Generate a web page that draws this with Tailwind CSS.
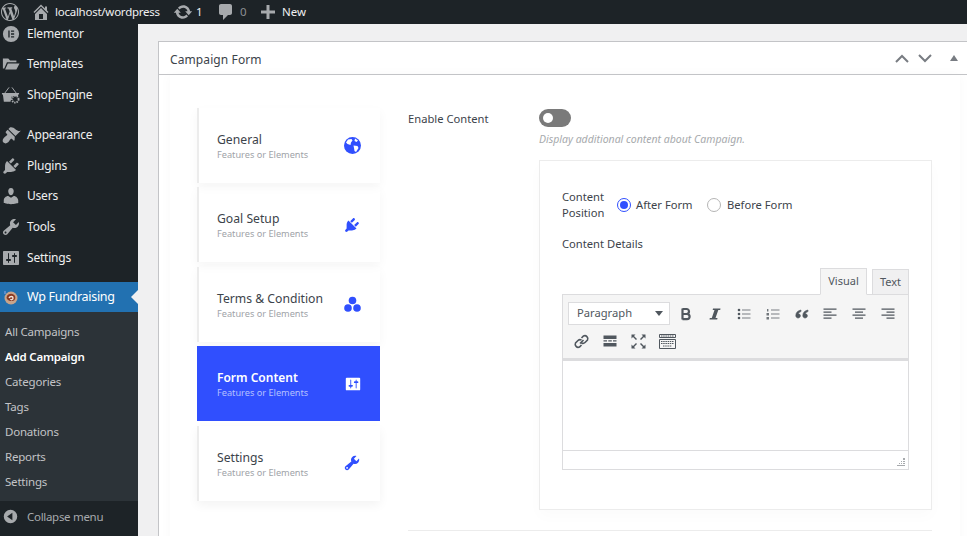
<!DOCTYPE html>
<html lang="en">
  <head>
    <meta charset="UTF-8" />
    <script src="https://cdn.jsdelivr.net/npm/@tailwindcss/browser@4"></script>
  </head>
  <body class="w-[967px] h-[536px] overflow-hidden bg-[#f0f0f1] font-['Noto_Sans',sans-serif]">
    <!-- admin bar -->
    <header class="relative z-10 h-6 bg-[#1d2327] flex items-center text-[11.5px] text-[#f0f0f1]">
      <svg class="w-[18px] h-[18px] ml-[1px] mr-[12px] text-[#a7aaad]" viewBox="0 0 20 20" fill="currentColor"><path d="M20 10c0-5.51-4.49-10-10-10C4.48 0 0 4.49 0 10c0 5.52 4.48 10 10 10 5.51 0 10-4.48 10-10zM7.78 15.37L4.37 6.22c.55-.02 1.17-.08 1.17-.08.5-.06.44-1.13-.06-1.11 0 0-1.45.11-2.37.11-.18 0-.37 0-.58-.01C4.12 2.69 6.87 1.11 10 1.11c2.33 0 4.45.87 6.05 2.34-.68-.11-1.65.39-1.65 1.58 0 .74.45 1.36.9 2.1.35.61.55 1.36.55 2.46 0 1.49-1.4 5-1.4 5l-3.03-8.37c.54-.02.82-.17.82-.17.5-.05.44-1.25-.06-1.22 0 0-1.44.12-2.38.12-.87 0-2.33-.12-2.33-.12-.5-.03-.56 1.2-.06 1.22l.92.08 1.26 3.41zM17.41 10c.24-.64.74-1.87.43-4.25.7 1.29 1.05 2.71 1.05 4.25 0 3.29-1.73 6.24-4.4 7.78.97-2.59 1.94-5.2 2.92-7.78zM6.1 18.09C3.12 16.65 1.11 13.53 1.11 10c0-1.3.23-2.48.72-3.59C3.25 10.3 4.67 14.2 6.1 18.09zm4.03-6.63l2.58 6.98c-.86.29-1.76.45-2.71.45-.79 0-1.57-.11-2.29-.33.81-2.38 1.62-4.74 2.42-7.1z"/></svg>
      <svg class="w-5 h-5 mr-[4px] text-[#a7aaad]" viewBox="0 0 20 20" fill="currentColor"><path d="M16 8.5l1.53 1.53-1.06 1.06L10 4.62l-6.47 6.47-1.06-1.06L10 2.5l4 4v-2h2v4zm-6-2.46l6 5.99V18H4v-5.97zM12 17v-5H8v5h4z"/></svg>
      <span class="w-[118px] tracking-[-0.25px]">localhost/wordpress</span>
      <svg class="w-5 h-5 mr-[3px] text-[#a7aaad]" viewBox="0 0 20 20" fill="currentColor"><path d="M10.2 3.28c3.53 0 6.43 2.61 6.92 6h2.08l-3.5 4-3.5-4h2.32c-.45-1.97-2.21-3.45-4.32-3.45-1.45 0-2.73.71-3.54 1.78L4.95 5.66C6.23 4.2 8.11 3.28 10.2 3.28zm-.4 13.44c-3.52 0-6.43-2.61-6.92-6H.8l3.5-4c1.17 1.33 2.33 2.67 3.5 4H5.48c.45 1.97 2.21 3.45 4.32 3.45 1.45 0 2.73-.71 3.54-1.78l1.71 1.95c-1.28 1.46-3.15 2.38-5.25 2.38z"/></svg>
      <span class="w-[20px]">1</span>
      <svg class="w-5 h-5 mr-[4px] text-[#a7aaad]" viewBox="0 0 20 20" fill="currentColor"><path d="M5 2h9c1.1 0 2 .9 2 2v7c0 1.1-.9 2-2 2h-2l-5 5v-5H5c-1.1 0-2-.9-2-2V4c0-1.1.9-2 2-2z"/></svg>
      <span class="w-[18px] text-[#8c8f94]">0</span>
      <svg class="w-5 h-5 mr-[4px] text-[#a7aaad]" viewBox="0 0 20 20" fill="currentColor"><path d="M17 8.5v3h-5.500V17h-3v-5.500H3v-3h5.500V3h3v5.500z"/></svg>
      <span>New</span>
    </header>

    <div class="flex h-[512px]">
      <!-- sidebar -->
      <aside class="w-[138px] shrink-0 bg-[#1d2327] flex flex-col text-[12px] tracking-[-0.2px] text-[#f0f0f1] overflow-hidden">
        <nav class="mt-[-5px] flex flex-col">
          <a class="h-[30px] flex items-center pl-[2px] gap-[7px]">
            <svg class="w-[18px] h-[18px] text-[#a7aaad]" viewBox="0 0 20 20" fill="currentColor"><path fill-rule="evenodd" d="M10 1a9 9 0 100 18 9 9 0 000-18zM7 6h1.5v8H7zm3 0h3.5v1.5H10zm0 3.2h3.5v1.5H10zm0 3.3h3.5V14H10z"/></svg>
            <span>Elementor</span>
          </a>
          <a class="h-[30px] flex items-center pl-[2px] gap-[7px]">
            <svg class="w-[18px] h-[18px] text-[#a7aaad]" viewBox="0 0 20 20" fill="currentColor"><path d="M1 4h6l2 2h7v2H5.5L2.5 15H1zM6.5 9.500H19.500L16 16H3.500z"/></svg>
            <span>Templates</span>
          </a>
          <a class="h-[31px] flex items-center pl-[1px] gap-[7px] mb-[10px]">
            <svg class="w-[19px] h-[19px] text-[#a7aaad]" viewBox="0 0 20 20" fill="currentColor"><path d="M1 8.500h18v1.500h-1v1.500h-6.500L10 17.500H3L2 10H1z"/><path d="M4 8.500L8.500 2.500M16 8.500L11.500 2.500" stroke="currentColor" fill="none" stroke-width="1"/><circle cx="15" cy="15" r="3.500" fill="none" stroke="currentColor" stroke-width="2" stroke-dasharray="1.500 1"/></svg>
            <span>ShopEngine</span>
          </a>
          <a class="h-[30px] flex items-center pl-[1px] gap-[6px]">
            <svg class="w-5 h-5 text-[#a7aaad]" viewBox="0 0 20 20" fill="currentColor"><path d="M14.48 11.06L7.41 3.99l1.5-1.5c.5-.56 2.3-.47 3.51.32 1.21.8 1.43 1.28 2.91 2.1 1.18.64 2.45 1.26 4.45.85zm-.71.71L6.7 4.7 4.93 6.47c-.39.39-.39 1.02 0 1.41l1.06 1.06c.39.39.39 1.03 0 1.42-.6.6-1.43 1.11-2.21 1.69-.35.26-.7.53-1.01.84-1.43 1.43-1.4 3.6-.3 4.7 1.1 1.1 3.27 1.13 4.7-.3.31-.31.58-.66.84-1.01.58-.78 1.09-1.61 1.69-2.21.39-.39 1.03-.39 1.42 0l1.06 1.06c.39.39 1.02.39 1.41 0z"/></svg>
            <span>Appearance</span>
          </a>
          <a class="h-[31px] flex items-center pl-[1px] gap-[6px]">
            <svg class="w-5 h-5 text-[#a7aaad]" viewBox="0 0 20 20" fill="currentColor"><path d="M13.11 4.36L9.87 7.6 8 5.73l3.24-3.24c.35-.34 1.05-.2 1.56.32.52.51.66 1.21.31 1.55zm-8 1.77l.91-1.12 9.01 9.01-1.19.84c-.71.71-2.63 1.16-3.82 1.16H6.14L4.9 17.26c-.59.59-1.54.59-2.12 0-.59-.58-.59-1.53 0-2.12l1.24-1.24v-3.88c0-1.13.4-3.19 1.09-3.89zm7.26 3.97l3.24-3.24c.34-.35 1.04-.21 1.55.31.52.51.66 1.21.31 1.55l-3.24 3.25z"/></svg>
            <span>Plugins</span>
          </a>
          <a class="h-[30px] flex items-center pl-[1px] gap-[6px]">
            <svg class="w-5 h-5 text-[#a7aaad]" viewBox="0 0 20 20" fill="currentColor"><path d="M10 9.250c-2.270 0-2.730-3.440-2.730-3.440C7 4.020 7.820 2 9.970 2c2.160 0 2.980 2.020 2.710 3.810 0 0-.41 3.440-2.680 3.440zm0 2.570L12.720 10c2.390 0 4.520 2.330 4.520 4.530v2.490s-3.650 1.130-7.240 1.130c-3.650 0-7.240-1.130-7.240-1.130v-2.490c0-2.250 1.940-4.480 4.470-4.480z"/></svg>
            <span>Users</span>
          </a>
          <a class="h-[31px] flex items-center pl-[1px] gap-[6px]">
            <svg class="w-5 h-5 text-[#a7aaad]" viewBox="0 0 20 20" fill="currentColor"><path d="M16.68 9.770c-1.340 1.340-3.300 1.670-4.950.99l-5.410 6.520c-.99.99-2.590.99-3.580 0s-.99-2.590 0-3.570l6.520-5.420c-.68-1.650-.35-3.610.99-4.950 1.280-1.280 3.120-1.620 4.720-1.060l-2.890 2.890 2.820 2.820 2.860-2.870c.53 1.580.18 3.390-1.080 4.650zM3.810 16.210c.4.39 1.040.39 1.430 0 .4-.4.4-1.040 0-1.430-.39-.4-1.030-.4-1.430 0-.39.39-.39 1.030 0 1.430z"/></svg>
            <span>Tools</span>
          </a>
          <a class="h-[31px] flex items-center pl-[1px] gap-[6px] mb-[9px]">
            <svg class="w-5 h-5 text-[#a7aaad]" viewBox="0 0 20 20" fill="currentColor"><path d="M18 16V4c0-.55-.45-1-1-1H3c-.55 0-1 .45-1 1v12c0 .55.45 1 1 1h14c.55 0 1-.45 1-1zM8 11h1c.55 0 1 .45 1 1s-.45 1-1 1H8v1.500c0 .28-.22.5-.5.5s-.5-.22-.5-.5V13H6c-.55 0-1-.45-1-1s.45-1 1-1h1V5.500c0-.28.22-.5.5-.5s.5.22.5.5V11zm5-2h-1c-.55 0-1-.45-1-1s.45-1 1-1h1V5.500c0-.28.22-.5.5-.5s.5.22.5.5V7h1c.55 0 1 .45 1 1s-.45 1-1 1h-1v5.500c0 .28-.22.5-.5.5s-.5-.22-.5-.5V9z"/></svg>
            <span>Settings</span>
          </a>
          <a class="relative h-[30px] flex items-center pl-[3px] gap-[8px] bg-[#2271b1] text-white">
            <svg class="w-[16px] h-[16px]" viewBox="0 0 16 16"><circle cx="8" cy="9" r="6.500" fill="#c9a48a"/><path d="M3.500 9a4.500 4 0 017-3.500c2 1 2.500 3.500 1 5.500-1.500 1.500-5 1.500-7-.5z" fill="#8a3a22"/><path d="M6 9c1-2 4-2 4 0s-2 2-2.500 1" fill="none" stroke="#f3e4da" stroke-width="1.400"/><path d="M2 2v3" stroke="#8fa8e8" stroke-width="1"/></svg>
            <span class="text-[12.500px] tracking-[-0.3px]">Wp Fundraising</span>
            <span class="absolute right-0 top-[8px] border-y-[7px] border-y-transparent border-r-[7px] border-r-[#f0f0f1]"></span>
          </a>
        </nav>
        <ul class="flex-1 bg-[#2c3338] pt-[7px] text-[11.500px] text-[#c3c4c7] pl-[5px] tracking-[-0.2px]">
          <li class="h-[25px] flex items-center">All Campaigns</li>
          <li class="h-[25px] flex items-center font-semibold text-white">Add Campaign</li>
          <li class="h-[25px] flex items-center">Categories</li>
          <li class="h-[25px] flex items-center">Tags</li>
          <li class="h-[25px] flex items-center">Donations</li>
          <li class="h-[25px] flex items-center">Reports</li>
          <li class="h-[25px] flex items-center">Settings</li>
        </ul>
        <div class="h-[35px] shrink-0 flex items-center pl-[3px] pb-[4px] gap-[9px] text-[11.500px] tracking-[-0.3px] text-[#a7aaad] bg-[#1d2327]">
          <svg class="w-[15px] h-[15px]" viewBox="0 0 20 20" fill="currentColor"><path fill-rule="evenodd" d="M10 1a9 9 0 100 18 9 9 0 000-18zm2.500 4v10l-7-5z"/></svg>
          <span>Collapse menu</span>
        </div>
      </aside>

      <!-- main -->
      <main class="flex-1 pl-5 pt-[17px] overflow-hidden">
        <section class="h-[600px] w-[820px] bg-white border-y border-l border-[#c3c4c7]">
          <div class="h-[33px] flex items-center border-b border-[#c3c4c7] pl-[11px] text-[12px] text-[#3c434a] relative">
            <h2 class="pt-1 tracking-[0.1px]">Campaign Form</h2>
            <div class="ml-auto flex items-center text-[#787c82] mr-5">
              <svg class="w-[14px] h-[9px]" viewBox="0 0 14 9" fill="none" stroke="currentColor" stroke-width="2"><path d="M1 8l6-6 6 6"/></svg>
              <svg class="w-[14px] h-[9px] ml-[9px]" viewBox="0 0 14 9" fill="none" stroke="currentColor" stroke-width="2"><path d="M1 1l6 6 6-6"/></svg>
              <span class="ml-[18px] border-x-[4px] border-x-transparent border-b-[6px] border-b-[#787c82]"></span>
            </div>
          </div>

          <div class="ml-[11px] w-[790px] h-[560px] flex pl-[27px] pt-[33px] shadow-[0_0_12px_rgba(0,0,0,0.03)]">
            <!-- tabs -->
            <div class="w-[183px] shrink-0 flex flex-col gap-[4.400px]">
              <div class="h-[75px] flex items-center justify-between pl-[18px] pr-[19px] border-l-2 border-[#ececec] shadow-[0_4px_10px_rgba(0,0,0,0.04)]">
                <div class="pt-[2px]"><p class="text-[12.200px] leading-[16px] text-[#3c434a]">General</p><p class="text-[9.200px] leading-[14px] text-[#a0a3a8]">Features or Elements</p></div>
                <svg class="w-[17px] h-[17px] text-[#304ffe]" viewBox="0 0 17 17"><circle cx="8.500" cy="8.500" r="8.500" fill="currentColor"/><path d="M4 2.500l3.500-.5 1 1.500L7 5.500 6.500 8 3.500 7 2 5.500zM9.500 8.500l4 .5 1 2-2.500 4-1.500-1-.5-3zM11 1.500l3 2-1.500 1.500-2-1z" fill="#fff"/></svg>
              </div>
              <div class="h-[75px] flex items-center justify-between pl-[18px] pr-[19px] border-l-2 border-[#ececec] shadow-[0_4px_10px_rgba(0,0,0,0.04)]">
                <div class="pt-[3px]"><p class="text-[12.200px] leading-[16px] text-[#3c434a]">Goal Setup</p><p class="text-[9.200px] leading-[14px] text-[#a0a3a8]">Features or Elements</p></div>
                <svg class="w-[18px] h-[18px] text-[#304ffe]" viewBox="0 0 20 20" fill="currentColor"><path d="M13.110 4.360L9.870 7.600 8 5.730l3.240-3.240c.35-.34 1.050-.2 1.560.32.52.51.66 1.210.31 1.550zm-8 1.770l.91-1.120 9.010 9.010-1.190.84c-.71.71-2.630 1.160-3.820 1.160H6.140L4.900 17.260c-.59.59-1.540.59-2.120 0-.59-.58-.59-1.530 0-2.120l1.240-1.240v-3.880c0-1.130.4-3.190 1.090-3.890zm7.260 3.970l3.240-3.240c.34-.35 1.040-.21 1.550.31.52.51.66 1.210.31 1.550l-3.240 3.250z"/></svg>
              </div>
              <div class="h-[75px] flex items-center justify-between pl-[18px] pr-[19px] border-l-2 border-[#ececec] shadow-[0_4px_10px_rgba(0,0,0,0.04)]">
                <div class="pt-[3px]"><p class="text-[12.200px] leading-[16px] text-[#3c434a]">Terms &amp; Condition</p><p class="text-[9.200px] leading-[14px] text-[#a0a3a8]">Features or Elements</p></div>
                <svg class="w-[17px] h-[17px] text-[#304ffe]" viewBox="0 0 17 17" fill="currentColor"><circle cx="8.500" cy="4.500" r="3.800"/><circle cx="4" cy="12" r="3.800"/><circle cx="13" cy="12" r="3.800"/></svg>
              </div>
              <div class="h-[75px] flex items-center justify-between pl-5 pr-[18px] bg-[#304ffe]">
                <div class="pt-[3px]"><p class="text-[12px] leading-[16px] font-semibold text-white">Form Content</p><p class="text-[9.200px] leading-[14px] text-[#b4c0ff]">Features or Elements</p></div>
                <svg class="w-[18px] h-[18px] text-white" viewBox="0 0 20 20" fill="currentColor"><path d="M18 16V4c0-.55-.45-1-1-1H3c-.55 0-1 .45-1 1v12c0 .55.45 1 1 1h14c.55 0 1-.45 1-1zM8 11h1c.55 0 1 .45 1 1s-.45 1-1 1H8v1.500c0 .28-.22.5-.5.5s-.5-.22-.5-.5V13H6c-.55 0-1-.45-1-1s.45-1 1-1h1V5.500c0-.28.22-.5.5-.5s.5.22.5.5V11zm5-2h-1c-.55 0-1-.45-1-1s.45-1 1-1h1V5.500c0-.28.22-.5.5-.5s.5.22.5.5V7h1c.55 0 1 .45 1 1s-.45 1-1 1h-1v5.500c0 .28-.22.5-.5.5s-.5-.22-.5-.5V9z"/></svg>
              </div>
              <div class="h-[75px] flex items-center justify-between pl-[18px] pr-[19px] border-l-2 border-[#ececec] shadow-[0_4px_10px_rgba(0,0,0,0.05)]">
                <div class="pt-[3px]"><p class="text-[12.200px] leading-[16px] text-[#3c434a]">Settings</p><p class="text-[9.200px] leading-[14px] text-[#a0a3a8]">Features or Elements</p></div>
                <svg class="w-[18px] h-[18px] text-[#304ffe]" viewBox="0 0 20 20" fill="currentColor"><path d="M16.680 9.770c-1.340 1.340-3.300 1.670-4.950.99l-5.410 6.520c-.99.99-2.590.99-3.580 0s-.99-2.590 0-3.570l6.520-5.420c-.68-1.650-.35-3.610.99-4.950 1.280-1.280 3.120-1.620 4.720-1.060l-2.890 2.890 2.820 2.820 2.860-2.870c.53 1.580.18 3.390-1.080 4.650zM3.810 16.210c.4.39 1.040.39 1.430 0 .4-.4.4-1.040 0-1.430-.39-.4-1.030-.4-1.430 0-.39.39-.39 1.030 0 1.430z"/></svg>
              </div>
            </div>

            <!-- content -->
            <div class="ml-7 w-[524px] shrink-0 pt-[1px] text-[11.200px] text-[#3c434a]">
              <div class="flex">
                <label class="w-[131px] pt-[2px] leading-[16px]">Enable Content</label>
                <div class="flex-1">
                  <span class="block w-8 h-[18px] rounded-full bg-[#7a7a7a] relative"><span class="absolute left-[4px] top-[4px] w-[10px] h-[10px] rounded-full bg-white"></span></span>
                  <p class="mt-[4px] text-[10.500px] leading-[16px] italic text-[#a7aaad]">Display additional content about Campaign.</p>
                </div>
              </div>

              <div class="ml-[131px] mt-[13px] w-[393px] h-[350px] border border-[#ececec] pl-[22px] pr-[22px] pt-[28px] shadow-[0_6px_14px_rgba(0,0,0,0.02)]">
                <div class="flex items-center">
                  <span class="w-[55px] leading-[16px]">Content Position</span>
                  <span class="w-[14px] h-[14px] rounded-full border border-[#304ffe] flex items-center justify-center"><span class="w-2 h-2 rounded-full bg-[#304ffe]"></span></span>
                  <span class="ml-[5px] w-[71px]">After Form</span>
                  <span class="w-[14px] h-[14px] rounded-full border border-[#b5b5b5]"></span>
                  <span class="ml-[6px]">Before Form</span>
                </div>
                <p class="mt-[15px] leading-[16px]">Content Details</p>

                <!-- editor -->
                <div class="mt-4 w-[347px]">
                  <div class="flex justify-end gap-[5px] h-[26px] text-[11px] text-[#50575e]">
                    <span class="w-[47px] h-[27px] z-1 bg-[#f5f5f5] border border-[#dcdcde] border-b-[#f5f5f5] flex items-center justify-center">Visual</span>
                    <span class="w-[37px] h-[26px] mt-[1px] bg-[#f0f0f1] border border-[#dcdcde] flex items-center justify-center">Text</span>
                  </div>
                  <div class="border border-[#dcdcde]">
                    <div class="h-[66px] bg-[#f5f5f5] border-b-[3px] border-[#dcdcde] pl-[5px] pt-[7px] text-[#50575e]">
                      <div class="h-[23px] flex items-center">
                        <span class="w-[102px] h-[23px] bg-white border border-[#dcdcde] flex items-center pl-2 pr-[6px] justify-between text-[11.200px]">Paragraph<span class="border-x-[4px] border-x-transparent border-t-[5px] border-t-[#50575e]"></span></span>
                        <svg class="w-[14px] h-[14px] ml-[9px]" viewBox="0 0 14 14" fill="none" stroke="currentColor" stroke-width="2.200"><path d="M3.500 1.500v11M3.500 2h4a2.300 2.300 0 010 5h-4m0 0h4.500a2.600 2.600 0 010 5.200H3.500"/></svg>
                        <svg class="w-[14px] h-[14px] ml-[15px]" viewBox="0 0 14 14" fill="currentColor"><path d="M5 1.500h7.500l-.3 1.500H10.300L7.500 11h2l-.3 1.500H1.500l.3-1.500h2L6.500 3H4.700z"/></svg>
                        <svg class="w-[14px] h-[14px] ml-[15px]" viewBox="0 0 14 14" fill="currentColor"><path d="M5 2.500h8.500v1H5zM5 6.500h8.500v1H5zM5 10.500h8.500v1H5z" opacity=".75"/><circle cx="2" cy="3" r="1.300"/><circle cx="2" cy="7" r="1.300"/><circle cx="2" cy="11" r="1.300"/></svg>
                        <svg class="w-[14px] h-[14px] ml-[15px]" viewBox="0 0 14 14" fill="currentColor"><path d="M5 2.500h8.500v1H5zM5 6.500h8.500v1H5zM5 10.500h8.500v1H5z" opacity=".75"/><path d="M1 2h1.400v2.500H1zM.5 6h2.500v2.500H.5zM.5 10h2.500v2.500H.5z" opacity=".8"/></svg>
                        <svg class="w-[14px] h-[14px] ml-[15px]" viewBox="0 0 14 14" fill="currentColor" stroke="currentColor" stroke-width=".6"><path d="M6 3C3 3.500 .8 5.500.8 8.500c0 1.500 1 2.500 2.300 2.500S5.400 10 5.400 8.800 4.500 6.800 3.300 6.800c.3-1 1.300-1.800 2.700-2.200zM13 3c-3 .5-5.200 2.500-5.200 5.500 0 1.500 1 2.500 2.300 2.500s2.300-1 2.300-2.200-.9-2-2.100-2c.3-1 1.300-1.800 2.700-2.200z"/></svg>
                        <svg class="w-[14px] h-[14px] ml-[14px]" viewBox="0 0 14 14" fill="currentColor"><path d="M.5 1.500h13v1.300H.5zM.5 4.500h8v1.300h-8zM.5 7.500h13v1.300H.5zM.5 10.500h8v1.300h-8z"/></svg>
                        <svg class="w-[14px] h-[14px] ml-[15px]" viewBox="0 0 14 14" fill="currentColor"><path d="M.5 1.500h13v1.300H.5zM3 4.500h8v1.300H3zM.5 7.500h13v1.300H.5zM3 10.500h8v1.300H3z"/></svg>
                        <svg class="w-[14px] h-[14px] ml-[15px]" viewBox="0 0 14 14" fill="currentColor"><path d="M.5 1.500h13v1.300H.5zM5.500 4.500h8v1.300h-8zM.5 7.500h13v1.300H.5zM5.500 10.500h8v1.300h-8z"/></svg>
                      </div>
                      <div class="h-[16px] mt-[8px] flex items-center pl-[5px]">
                        <svg class="w-[17px] h-[17px]" viewBox="0 0 17 17" fill="none" stroke="currentColor" stroke-width="1.600"><path d="M7 10.500l3.500-3.500M8.500 5l2-2a3 3 0 014 4l-2.500 2.500a3 3 0 01-3.500.5M8.500 12l-2 2a3 3 0 01-4-4L5 7.500a3 3 0 013.500-.5"/></svg>
                        <svg class="w-[14px] h-[14px] ml-[13px]" viewBox="0 0 14 14" fill="currentColor"><path d="M.5 1.500h13v3.500H.5zM.5 6.300h3.500v1.300H.5zM5.300 6.300h3.500v1.300H5.300zM10 6.300h3.500v1.300H10zM.5 9h13v3.500H.5z"/></svg>
                        <svg class="w-[15px] h-[15px] ml-[14px]" viewBox="0 0 15 15" fill="currentColor"><path d="M.5.500h4L3 2l3 3-1 1-3-3-1.500 1.500zM14.500.500h-4L12 2 9 5l1 1 3-3 1.500 1.500zM.5 14.500h4L3 13l3-3-1-1-3 3-1.500-1.500zM14.500 14.500h-4L12 13l-3-3 1-1 3 3 1.500-1.500z"/></svg>
                        <svg class="w-[17px] h-[15px] ml-[13px]" viewBox="0 0 17 15" fill="none" stroke="currentColor"><path d="M.5.500h16v3h-16zM.5 5.500h16v9h-16z"/><path d="M2 7.500h13M2 9.500h13M4 12h9" stroke-width="1.200" stroke-dasharray="1.500 .7"/><path d="M2 2h13" stroke-dasharray="1.500 .7"/></svg>
                      </div>
                    </div>
                    <div class="h-[90px] bg-white border-b border-[#dcdcde]"></div>
                    <div class="h-[18px] bg-white flex items-end justify-end pr-[3px] pb-[3px]">
                      <svg class="w-[8px] h-[8px] text-[#a7aaad]" viewBox="0 0 8 8" fill="currentColor"><path d="M6 0h2v2H6zM4 3h1v1H4zM6 3h2v1H6zM2 5h1v1H2zM4 5h1v1H4zM6 5h2v1H6zM0 7h8v1H0z"/></svg>
                    </div>
                  </div>
                </div>
              </div>

              <div class="mt-5 border-t border-[#ececec]"></div>
            </div>
          </div>
        </section>
      </main>
    </div>
  </body>
</html>
